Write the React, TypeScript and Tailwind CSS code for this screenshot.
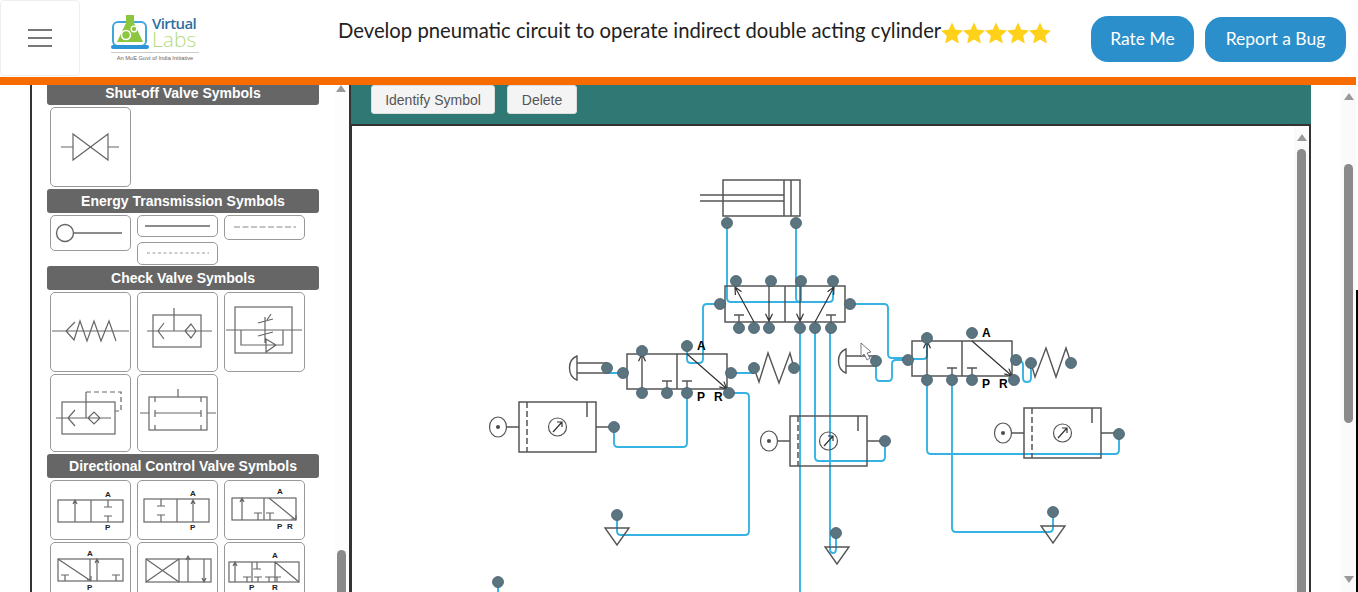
import React from 'react';

const BLUE = '#36b3e3';
const LINE = '#555';

// connection port
const Dot: React.FC<{ x: number; y: number }> = ({ x, y }) => (
  <circle cx={x} cy={y} r={5.5} fill="#5a7480" stroke="#47606c" strokeWidth={0.8} />
);

const Wire: React.FC<{ d: string }> = ({ d }) => (
  <path d={d} fill="none" stroke={BLUE} strokeWidth={1.9} strokeLinejoin="round" />
);

const Blocked: React.FC<{ x: number; y: number }> = ({ x, y }) => (
  <path d={`M${x} ${y}V${y - 8}M${x - 5} ${y - 8}H${x + 5}`} fill="none" stroke={LINE} strokeWidth={1.4} />
);

const Arrow: React.FC<{ x1: number; y1: number; x2: number; y2: number }> = ({ x1, y1, x2, y2 }) => {
  const a = Math.atan2(y2 - y1, x2 - x1);
  const l = 8;
  const p1 = [x2 - l * Math.cos(a - 0.45), y2 - l * Math.sin(a - 0.45)];
  const p2 = [x2 - l * Math.cos(a + 0.45), y2 - l * Math.sin(a + 0.45)];
  return (
    <path d={`M${x1} ${y1}L${x2} ${y2}M${p1[0]} ${p1[1]}L${x2} ${y2}L${p2[0]} ${p2[1]}`} fill="none" stroke="#333" strokeWidth={1.2} />
  );
};

const Filter: React.FC<{ x: number; y: number }> = ({ x, y }) => (
  <g fill="none" stroke={LINE} strokeWidth={1.5}>
    <rect x={x} y={y} width={77} height={50} />
    <path d={`M${x + 8} ${y}V${y + 50}`} strokeDasharray="6 3" />
    <path d={`M${x + 68} ${y}V${y + 15}`} />
    <circle cx={x + 38.5} cy={y + 25} r={9} strokeWidth={1.2} />
    <path d={`M${x + 34} ${y + 30}L${x + 43} ${y + 20}M${x + 38} ${y + 20}H${x + 43}V${y + 25}`} stroke="#333" strokeWidth={1.2} />
    <path d={`M${x} ${y + 25}H${x - 13}M${x + 77} ${y + 25}H${x + 90}`} />
    <ellipse cx={x - 21} cy={y + 25} rx={8.5} ry={10} strokeWidth={1.2} />
    <circle cx={x - 21} cy={y + 25} r={1.3} fill="#222" />
  </g>
);

const Exhaust: React.FC<{ x: number; y: number }> = ({ x, y }) => (
  <path d={`M${x - 12} ${y}H${x + 12}L${x} ${y + 17}Z`} fill="none" stroke={LINE} strokeWidth={1.4} />
);

const Plunger: React.FC<{ x: number; y: number; w: number }> = ({ x, y, w }) => (
  <path d={`M${x} ${y - 12}C${x - 10} ${y - 8} ${x - 10} ${y + 8} ${x} ${y + 12}ZM${x} ${y - 5}H${x + w}M${x} ${y + 5}H${x + w}`} fill="#fff" stroke={LINE} strokeWidth={1.4} />
);

const Spring: React.FC<{ d: string }> = ({ d }) => <path d={d} fill="none" stroke={LINE} strokeWidth={1.4} />;

const Label: React.FC<{ x: number; y: number; children: React.ReactNode }> = ({ x, y, children }) => (
  <text x={x} y={y} fontFamily="'Liberation Sans', sans-serif" fontWeight={700} fontSize={12} fill="#000">{children}</text>
);

// viewBox uses screen coordinates so points can be read off the picture
const Circuit = () => (
  <svg viewBox="352 126 942 466" className="block w-[942px] h-[466px] shrink-0">
    {/* wires */}
    <Wire d="M727 224V298Q727 302 731 302H829Q833 302 833 298V281" />
    <Wire d="M796 224V298Q796 302 800 302M801 281V302" />
    <Wire d="M850 304H884Q888 304 888 308V354Q888 358 892 358H908" />
    <Wire d="M720 304H707Q703 304 703 308V359Q703 363 699 363H691Q687 363 687 359V346" />
    <Wire d="M607 368V373H623" />
    <Wire d="M731 373H754V368" />
    <Wire d="M687 393V443Q687 447 683 447H618Q614 447 614 443V427" />
    <Wire d="M729 393H745Q749 393 749 397V531Q749 535 745 535H621Q617 535 617 531V515" />
    <Wire d="M800 328V592" />
    <Wire d="M815 328V457Q815 461 819 461H881Q885 461 885 457V441" />
    <Wire d="M830 328V549Q830 553 833 553Q836 553 836 549V533" />
    <Wire d="M876 361V377Q876 381 880 381H888Q892 381 892 377V364Q892 360 896 360H908" />
    <Wire d="M908 359H923Q927 359 927 355V338" />
    <Wire d="M927 380V450Q927 454 931 454H1115Q1119 454 1119 450V434" />
    <Wire d="M952 380V528Q952 532 956 532H1049Q1053 532 1053 528V512" />
    <Wire d="M1016 361H1019Q1023 361 1023 365V378Q1023 382 1027 382Q1031 382 1031 378V363" />
    <Wire d="M498 582V592" />

    {/* cylinder */}
    <g fill="none" stroke={LINE} strokeWidth={1.5}>
      <rect x={723} y={180} width={77} height={36} />
      <path d="M784 180V216M791 180V216M700 195H784M700 201H784" />
    </g>

    {/* 5/2 valve */}
    <g fill="none" stroke={LINE} strokeWidth={1.5}>
      <rect x={725} y={286} width={120} height={36} />
      <path d="M785 286V322" />
    </g>
    <Arrow x1={754} y1={322} x2={735} y2={287} />
    <Arrow x1={769} y1={286} x2={769} y2={321} />
    <Arrow x1={800} y1={286} x2={800} y2={321} />
    <Arrow x1={815} y1={322} x2={834} y2={287} />
    <Blocked x={739} y={323} />
    <Blocked x={831} y={323} />

    {/* left 3/2 valve */}
    <g fill="none" stroke={LINE} strokeWidth={1.5}>
      <rect x={627} y={354} width={100} height={35} />
      <path d="M677 354V389" />
    </g>
    <Arrow x1={642} y1={389} x2={642} y2={354} />
    <Arrow x1={687} y1={354} x2={727} y2={389} />
    <Blocked x={667} y={389} />
    <Blocked x={687} y={389} />
    <Plunger x={577} y={368} w={30} />
    <Spring d="M754 368L759 382L768 353L779 383L790 353L794 368" />

    {/* right 3/2 valve */}
    <g fill="none" stroke={LINE} strokeWidth={1.5}>
      <rect x={912} y={341} width={100} height={35} />
      <path d="M962 341V376" />
    </g>
    <Arrow x1={927} y1={376} x2={927} y2={341} />
    <Arrow x1={972} y1={341} x2={1012} y2={376} />
    <Blocked x={952} y={376} />
    <Blocked x={972} y={376} />
    <Plunger x={846} y={361} w={30} />
    <Spring d="M1031 363L1035 377L1046 348L1056 377L1066 348L1071 363" />

    {/* filters */}
    <Filter x={519} y={402} />
    <Filter x={790} y={416} />
    <Filter x={1024} y={408} />

    {/* exhausts */}
    <Exhaust x={617} y={528} />
    <Exhaust x={837} y={547} />
    <Exhaust x={1053} y={526} />

    <Label x={697} y={350}>A</Label>
    <Label x={697} y={401}>P</Label>
    <Label x={714} y={401}>R</Label>
    <Label x={982} y={337}>A</Label>
    <Label x={982} y={388}>P</Label>
    <Label x={999} y={388}>R</Label>

    {/* ports */}
    {[
      [727, 223], [796, 223], [736, 281], [771, 281], [801, 281], [833, 281],
      [720, 304], [850, 304], [739, 328], [754, 328], [769, 328], [800, 328], [815, 328], [831, 328],
      [607, 368], [623, 373], [642, 351], [687, 346], [642, 393], [667, 393], [687, 393], [731, 373], [729, 393],
      [754, 368], [794, 368],
      [876, 361], [908, 360], [927, 338], [972, 333], [1016, 360], [1031, 363], [1071, 363],
      [927, 380], [952, 380], [972, 380], [1014, 380],
      [614, 427], [885, 441], [1119, 434],
      [617, 515], [836, 533], [1053, 512], [498, 582],
    ].map(([x, y]) => <Dot key={`${x}-${y}`} x={x} y={y} />)}

    {/* mouse pointer */}
    <path d="M861 343V357L864 354L867 360L870 358L867 353L871 352Z" fill="#fff" stroke="#556" strokeWidth={0.8} />
  </svg>
);

const SymbolCard: React.FC<{ h: number; mb?: string; children: React.ReactNode }> = ({ h, mb, children }) => (
  <div className={`float-left w-[81px] mx-[3px] mt-px border border-[#999] rounded-[5px] bg-white overflow-hidden ${mb ?? 'mb-px'}`} style={{ height: h }}>
    <svg viewBox={`0 0 79 ${h - 2}`} className="block w-full h-full" fill="none" stroke="#666" strokeWidth={1.2}>
      {children}
    </svg>
  </div>
);

const SectionTitle: React.FC<{ children: React.ReactNode }> = ({ children }) => (
  <div className="clear-both w-[272px] h-6 my-px rounded-[3px] bg-[#666] text-white text-[14px] leading-6 font-bold text-center font-['Liberation_Sans',sans-serif]">
    {children}
  </div>
);

const ValveBody: React.FC<{ x: number; y: number; w: number; h: number; mid: number }> = ({ x, y, w, h, mid }) => (
  <>
    <rect x={x} y={y} width={w} height={h} />
    <path d={`M${mid} ${y}V${y + h}`} />
  </>
);

const Tiny: React.FC<{ x: number; y: number; children: React.ReactNode }> = ({ x, y, children }) => (
  <text x={x} y={y} fontFamily="'Liberation Sans', sans-serif" fontWeight={700} fontSize={8} fill="#222" stroke="none">{children}</text>
);

const Sidebar = () => (
  <aside className="w-[321px] shrink-0 border-x-2 border-[#333] bg-white flex overflow-hidden">
    <div className="w-[302px] shrink-0 pl-[15px] -mt-[5px]">
      <SectionTitle>Shut-off Valve Symbols</SectionTitle>
      <SymbolCard h={80} mb="mb-[2px]">
        <path d="M10 39H22M57 39H68M22 26V52L57 26V52L22 26Z" />
      </SymbolCard>

      <SectionTitle>Energy Transmission Symbols</SectionTitle>
      <SymbolCard h={36}>
        <circle cx={14} cy={17} r={8.5} strokeWidth={1.4} />
        <path d="M23 17H71" strokeWidth={1.4} />
      </SymbolCard>
      <SymbolCard h={22}>
        <path d="M7 10H72" strokeWidth={1.6} />
      </SymbolCard>
      <SymbolCard h={25}>
        <path d="M9 11H71" strokeDasharray="6 2.5" stroke="#888" />
      </SymbolCard>
      <SymbolCard h={23}>
        <path d="M9 10H71" strokeDasharray="3 2.5" stroke="#999" />
      </SymbolCard>

      <SectionTitle>Check Valve Symbols</SectionTitle>
      <SymbolCard h={80}>
        <path d="M1 38H78M24 29L15 38L23 47L29 28L36 48L43 28L50 48L58 28L65 48" />
      </SymbolCard>
      <SymbolCard h={80}>
        <rect x={15} y={22} width={48} height={32} />
        <path d="M9 38H74M36 15V38M26 30L20 38L26 46M47 38L53 31L58 38L53 45Z" />
      </SymbolCard>
      <SymbolCard h={80}>
        <rect x={10} y={14} width={57} height={46} />
        <path d="M1 37H77M16 37V52H58V37M40 24V50M33 30L48 26M33 43L48 39M46 21L42 27M41 46L51 52L41 59Z" />
      </SymbolCard>
      <SymbolCard h={78} mb="mb-[2px]">
        <rect x={11} y={27} width={53} height={32} />
        <path d="M5 43H60M24 35L17 43L24 51M35 43V17M37 43L43 37L49 43L43 49Z" />
        <path d="M35 17H70V36H64" strokeDasharray="5 3" />
      </SymbolCard>
      <SymbolCard h={78} mb="mb-[2px]">
        <rect x={11} y={22} width={58} height={33} />
        <path d="M2 38H11M69 38H78M40 14V22M17 35V42M17 38H63M63 35V42M17 22V27M63 22V27M17 50V55M63 50V55" />
      </SymbolCard>

      <SectionTitle>Directional Control Valve Symbols</SectionTitle>
      <SymbolCard h={60}>
        <ValveBody x={7} y={19} w={65} h={22} mid={40} />
        <path d="M24 41V19M22 23L24 19L26 23M57 19V26M53 26H61M57 41V35M53 35H61" />
        <Tiny x={54} y={16}>A</Tiny>
        <Tiny x={54} y={49}>P</Tiny>
      </SymbolCard>
      <SymbolCard h={60}>
        <ValveBody x={6} y={18} w={65} h={23} mid={39} />
        <path d="M55 41V19M53 23L55 19L57 23M23 18V25M19 25H27M23 41V34M19 34H27" />
        <Tiny x={52} y={15}>A</Tiny>
        <Tiny x={52} y={49}>P</Tiny>
      </SymbolCard>
      <SymbolCard h={60}>
        <ValveBody x={7} y={17} w={64} h={22} mid={39} />
        <path d="M17 39V17M15 21L17 17L19 21M33 39V32M29 32H37M45 39V32M41 32H49M44 17L71 39M66 38H71V34" />
        <Tiny x={52} y={13}>A</Tiny>
        <Tiny x={52} y={48}>P</Tiny>
        <Tiny x={62} y={48}>R</Tiny>
      </SymbolCard>
      <SymbolCard h={60}>
        <ValveBody x={7} y={16} w={65} h={22} mid={39} />
        <path d="M7 16L40 38M36 37H40V33M46 38V16M44 20L46 16L48 20M14 38V32M10 32H18M65 38V32M61 32H69" />
        <Tiny x={36} y={13}>A</Tiny>
        <Tiny x={36} y={47}>P</Tiny>
      </SymbolCard>
      <SymbolCard h={60}>
        <ValveBody x={8} y={16} w={65} h={23} mid={41} />
        <path d="M8 16L41 39M8 39L41 16M50 39V13M48 17L50 13L52 17M66 16V39M64 35L66 39L68 35" />
      </SymbolCard>
      <SymbolCard h={60}>
        <ValveBody x={4} y={19} w={70} h={20} mid={27} />
        <path d="M10 39V19M8 23L10 19L12 23M50 19V39M32 19V26M28 26H36M22 39V34M18 34H26M33 39V34M29 34H37M44 39V34M40 34H48M52 39V34M48 34H56M50 19L74 39" />
        <Tiny x={47} y={15}>A</Tiny>
        <Tiny x={24} y={47}>P</Tiny>
        <Tiny x={47} y={47}>R</Tiny>
      </SymbolCard>
    </div>
    {/* sidebar scrollbar */}
    <div className="flex-1 flex flex-col items-center pr-px bg-[#fdfdfd]">
      <div className="w-0 h-0 border-x-[5px] border-x-transparent border-b-[7px] border-b-[#999]" />
      <div className="mt-[458px] w-[9px] flex-1 rounded-t-full bg-[#8a8a8a]" />
    </div>
  </aside>
);

const Logo = () => (
  <div className="w-[88px] ml-[31px] shrink-0 flex flex-col">
    <div className="flex items-center gap-[2px] h-[38px]">
      <svg viewBox="0 0 39 37" className="w-[39px] h-[37px] shrink-0">
        <rect x={2} y={8} width={33} height={24} rx={5} fill="none" stroke="#3fa7dc" strokeWidth={2} />
        <rect x={0} y={31} width={38} height={4} rx={2} fill="#2b95d6" />
        <path d="M15 1H23V9L32 28H6L15 9Z" fill="#8cc63f" />
        <circle cx={15} cy={21} r={4.5} fill="none" stroke="#fff" strokeWidth={1.6} />
        <circle cx={23} cy={15} r={2.8} fill="none" stroke="#fff" strokeWidth={1.3} />
      </svg>
      <div className="flex flex-col font-['Open_Sans',sans-serif] -mt-0.5">
        <span className="text-[15px] leading-[16px] font-semibold tracking-[-0.6px] text-[#2f6f9f]">Virtual</span>
        <span className="text-[21px] leading-[17px] font-light text-[#b3dc7e]">Labs</span>
      </div>
    </div>
    <div className="mt-px pt-[1px] border-t border-[#ccc] text-center text-[5.7px] leading-[8px] text-[#666] font-['Liberation_Sans',sans-serif] whitespace-nowrap">An MoE Govt of India Initiative</div>
  </div>
);

const Star = () => (
  <svg viewBox="1 1.5 22 21" className="w-[22px] h-[22px]">
    <path d="M12 1.5L15.2 8.6L23 9.5L17.2 14.8L18.8 22.5L12 18.6L5.2 22.5L6.8 14.8L1 9.5L8.8 8.6Z" fill="#ffd11a" />
  </svg>
);

export default function App() {
  return (
    <div className="h-[592px] w-[1358px] overflow-hidden flex bg-white">
      <div className="w-[1356px] shrink-0 flex flex-col font-['Lato',sans-serif]">
        <header className="h-[85px] shrink-0 border-b-8 border-[#f76b00] flex items-start bg-white">
          <button className="w-[80px] h-[76px] shrink-0 border border-[#eee] rounded-[4px] flex flex-col items-center justify-center gap-[6px]">
            <span className="block w-6 h-0.5 bg-[#777]" />
            <span className="block w-6 h-0.5 bg-[#777]" />
            <span className="block w-6 h-0.5 bg-[#777]" />
          </button>
          <div className="pt-[13px]"><Logo /></div>
          <div className="ml-[139px] w-[753px] flex items-center h-[60px] text-[20.25px] text-[#222] whitespace-nowrap">
            <span>Develop pneumatic circuit to operate indirect double acting cylinder</span>
            <span className="flex mt-[5px]">
              <Star /><Star /><Star /><Star /><Star />
            </span>
          </div>
          <div className="flex items-center gap-[11px] pt-4">
            <button className="h-[46px] w-[103px] rounded-[17px] bg-[#2b8fcb] text-white text-[17.5px]">Rate Me</button>
            <button className="h-[45px] w-[141px] rounded-[17px] bg-[#2b8fcb] text-white text-[17.5px]">Report a Bug</button>
          </div>
        </header>

        <div className="flex-1 min-h-0 flex pl-[30px]">
          <Sidebar />
          <main className="w-[960px] shrink-0 flex flex-col">
            <div className="h-[39px] shrink-0 bg-[#2f7873] flex items-start gap-3 pl-5">
              <button className="h-[29px] w-[124px] pt-[2px] bg-[#f4f4f4] border border-[#ddd] rounded-[3px] text-[14px] text-[#555] font-['Liberation_Sans',sans-serif]">Identify Symbol</button>
              <button className="h-[29px] w-[70px] pt-[2px] bg-[#f4f4f4] border border-[#ddd] rounded-[3px] text-[14px] text-[#555] font-['Liberation_Sans',sans-serif]">Delete</button>
            </div>
            <div className="flex-1 min-h-0 border-t-2 border-r-2 border-l border-[#333] flex bg-white">
              <Circuit />
              <div className="flex-1 flex flex-col items-center pt-[8px] bg-[#fafafa]">
                <div className="w-0 h-0 border-x-[5px] border-x-transparent border-b-[7px] border-b-[#999]" />
                <div className="mt-[8px] w-[9px] flex-1 rounded-t-full bg-[#8a8a8a]" />
              </div>
            </div>
          </main>
          <div className="w-[30px] shrink-0" />
          {/* page scrollbar */}
          <div className="w-[15px] shrink-0 flex flex-col items-center pt-2 pb-[9px] bg-[#fafafa]">
            <div className="w-0 h-0 border-x-[5px] border-x-transparent border-b-[7px] border-b-[#999]" />
            <div className="mt-[64px] h-[259px] w-[9px] rounded-full bg-[#8a8a8a]" />
            <div className="mt-auto w-0 h-0 border-x-[5px] border-x-transparent border-t-[7px] border-t-[#999]" />
          </div>
        </div>
      </div>
      {/* window edge */}
      <div className="w-[2px] shrink-0 flex flex-col">
        <div className="h-[290px] bg-white" />
        <div className="flex-1 bg-black" />
      </div>
    </div>
  );
}
